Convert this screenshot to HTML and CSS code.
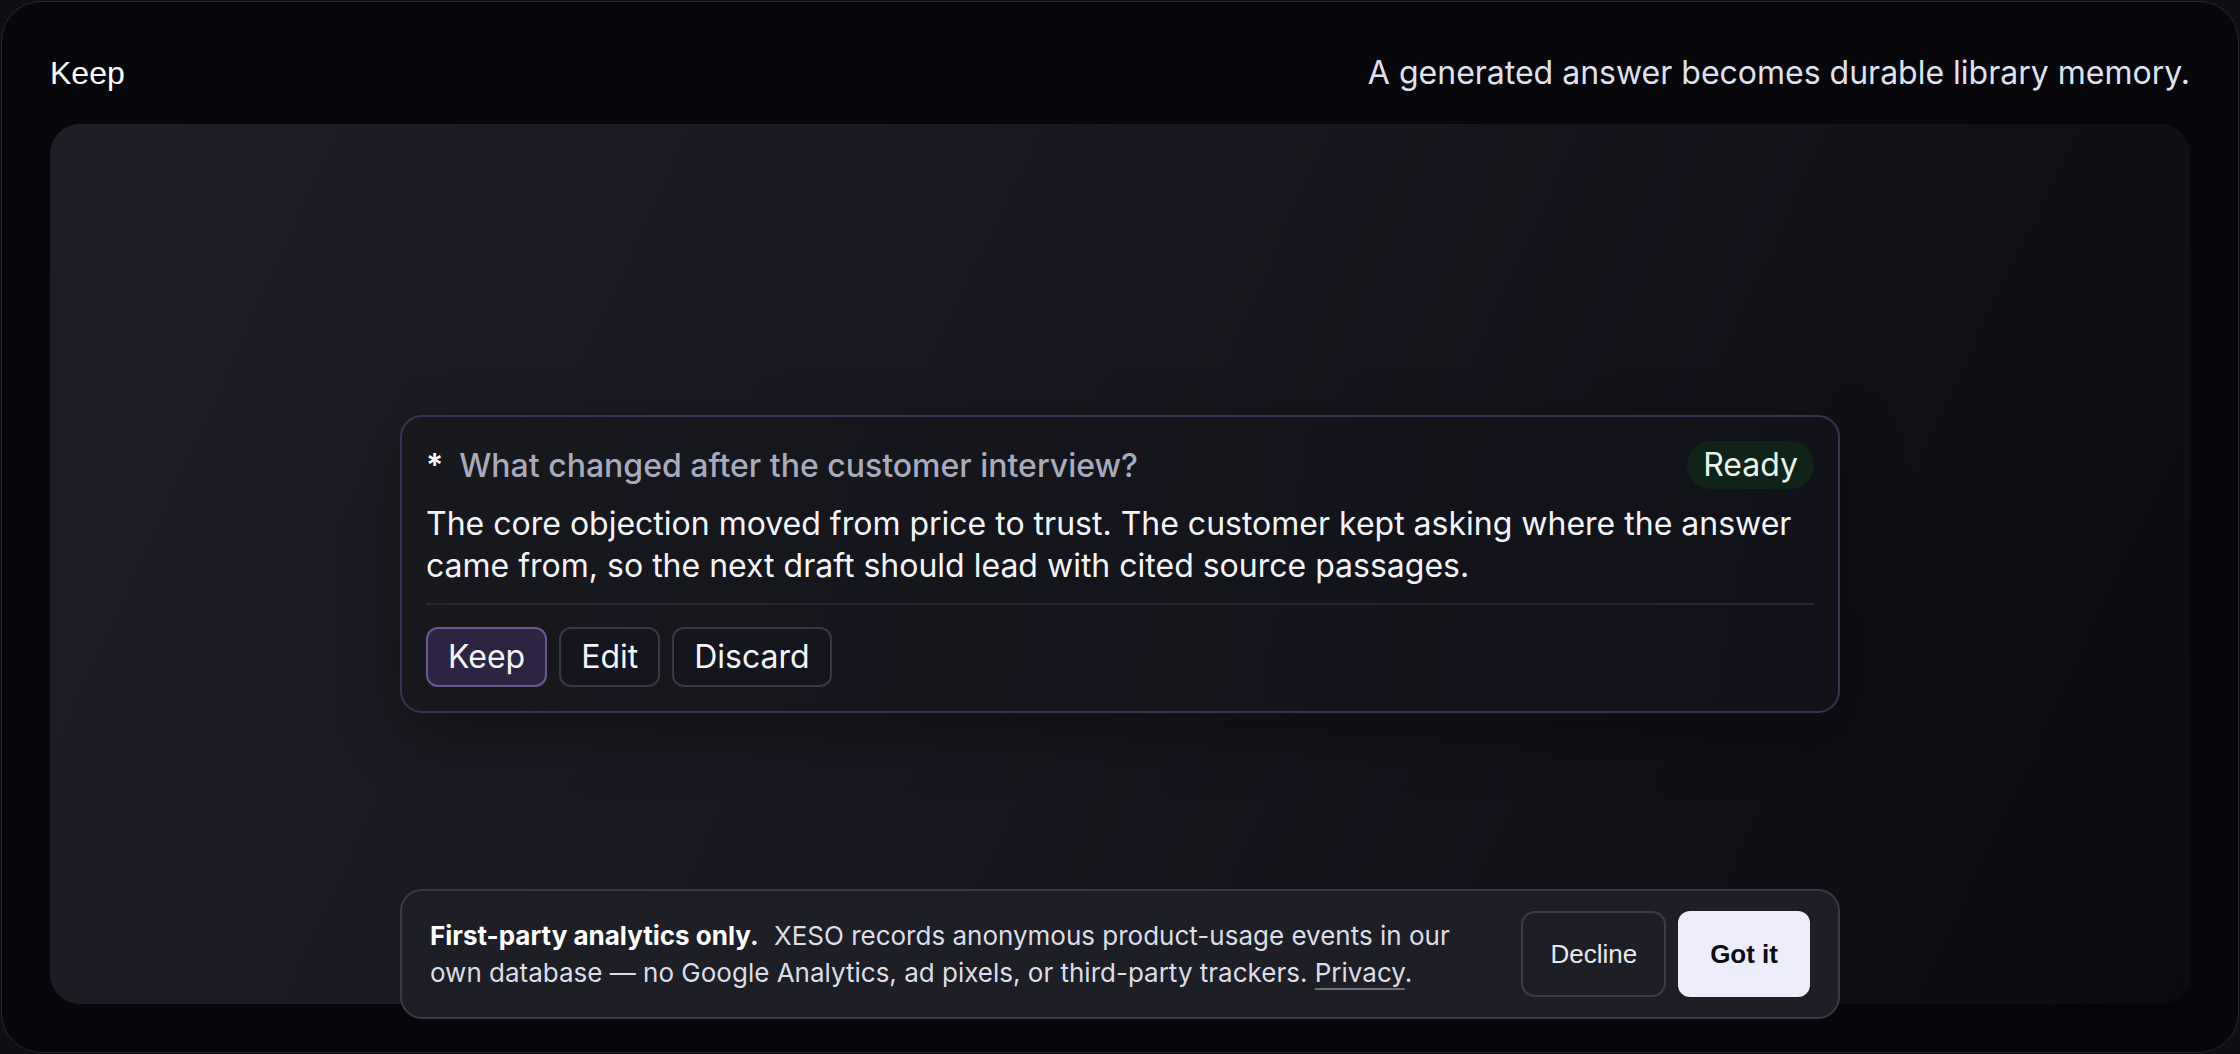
FILE: index.html
```html
<!DOCTYPE html>
<html lang="en">
<head>
    <meta charset="UTF-8">
    <meta name="viewport" content="width=device-width, initial-scale=1.0">
    <title>Keep</title>
    <link rel="stylesheet" href="styles.css">
</head>
<body>

<div class="frame">
    <div class="header">
        <h1 class="title">Keep</h1>
        <p class="tagline">A generated answer becomes durable library memory.</p>
    </div>

    <div class="stage">
        <div class="answer-card">
            <div class="answer-head">
                <div class="question">
                    <span class="star">*</span>
                    <span>What changed after the customer interview?</span>
                </div>
                <span class="status-pill">Ready</span>
            </div>
            <p class="answer-text">The core objection moved from price to trust. The customer kept asking where the answer came from, so the next draft should lead with cited source passages.</p>
            <div class="divider"></div>
            <div class="actions">
                <button class="action-btn keep-btn">Keep</button>
                <button class="action-btn">Edit</button>
                <button class="action-btn">Discard</button>
            </div>
        </div>
    </div>
</div>

<div class="cookie-bar">
    <p class="cookie-text"><strong>First-party analytics only.</strong> XESO records anonymous product-usage events in our own database — no Google Analytics, ad pixels, or third-party trackers. <a href="#" class="privacy-link">Privacy</a>.</p>
    <div class="cookie-actions">
        <button class="decline-btn">Decline</button>
        <button class="accept-btn">Got it</button>
    </div>
</div>

</body>
</html>
```

FILE: styles.css
```css
* {
    box-sizing: border-box;
}

html, body {
    height: 100%;
}

body {
    margin: 0;
    background-color: #0e0f15;
    font-family: Inter, "Noto Sans", sans-serif;
    color: #f2f3f8;
    overflow: hidden;
}

.frame {
    margin: 1px;
    height: calc(100% - 2px);
    display: flex;
    flex-direction: column;
    padding: 0 48px 48px;
    background-color: #06060b;
    border: 1px solid #252631;
    border-radius: 40px;
}

.header {
    display: flex;
    justify-content: space-between;
    align-items: baseline;
    padding: 52px 0 32px;
    line-height: 38px;
}

.title {
    margin: 0;
    font-family: "Liberation Sans", Arial, sans-serif;
    font-size: 32px;
    font-weight: normal;
    color: #ffffff;
}

.tagline {
    margin: 0;
    font-size: 32px;
    color: #dfe2ee;
}

.stage {
    flex: 1;
    display: flex;
    align-items: center;
    justify-content: center;
    border-radius: 30px;
    background: linear-gradient(115deg, #1e1f26 0%, #17181f 45%, #0b0c11 100%);
}

.answer-card {
    width: 1440px;
    padding: 24px;
    background: linear-gradient(100deg, #18181f 0%, #111219 100%);
    border: 2px solid #3a3350;
    border-radius: 22px;
    box-shadow: 0 20px 60px rgba(0, 0, 0, 0.35);
}

.answer-head {
    display: flex;
    justify-content: space-between;
    align-items: center;
}

.question {
    display: flex;
    align-items: center;
    font-size: 32px;
    font-weight: 500;
    color: #a8aabd;
}

.star {
    color: #ffffff;
    font-weight: 600;
    margin-right: 16px;
}

.status-pill {
    padding: 4px 16px;
    font-size: 32px;
    line-height: 40px;
    color: #e9f3ec;
    background-color: #102319;
    border-radius: 999px;
}

.answer-text {
    margin: 14px 0 0;
    font-size: 32px;
    line-height: 42px;
    color: #f4f5fa;
}

.divider {
    height: 2px;
    margin: 16px 0 22px;
    background-color: #25262f;
}

.actions {
    display: flex;
    gap: 12px;
}

.action-btn {
    padding: 7px 20px;
    font-family: Inter, "Noto Sans", sans-serif;
    font-size: 32px;
    line-height: 1.3;
    color: #f4f5fa;
    background-color: #15161d;
    border: 2px solid #383943;
    border-radius: 12px;
    cursor: pointer;
}

.keep-btn {
    background-color: #2d2442;
    border-color: #6b5794;
}

.cookie-bar {
    position: fixed;
    left: 50%;
    bottom: 35px;
    width: 1440px;
    transform: translateX(-50%);
    display: flex;
    align-items: center;
    gap: 28px;
    padding: 20px 28px;
    background-color: #1e1f26;
    border: 2px solid #393a44;
    border-radius: 22px;
}

.cookie-text {
    flex: 1;
    margin: 0;
    font-size: 26px;
    line-height: 37px;
    color: #dcdde6;
}

.cookie-text strong {
    margin-right: 8px;
    color: #ffffff;
}

.privacy-link {
    color: #dcdde6;
    text-decoration: underline;
    text-decoration-color: #6b6c78;
    text-decoration-thickness: 2px;
    text-underline-offset: 6px;
}

.cookie-actions {
    display: flex;
    gap: 12px;
}

.decline-btn,
.accept-btn {
    height: 86px;
    font-family: "Liberation Sans", Arial, sans-serif;
    font-size: 26px;
    border-radius: 14px;
    cursor: pointer;
}

.decline-btn {
    padding: 0 27px;
    color: #e8e8f0;
    background-color: transparent;
    border: 2px solid #3c3d47;
}

.accept-btn {
    padding: 0 30px;
    font-weight: bold;
    color: #0b0b12;
    background-color: #ececfb;
    border: 2px solid #ececfb;
    border-radius: 12px;
}
```
